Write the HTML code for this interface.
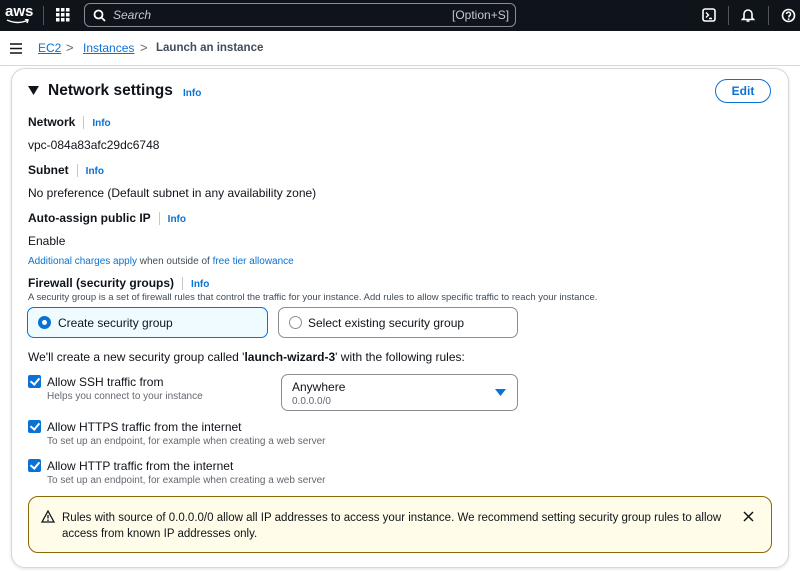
<!DOCTYPE html>
<html><head><meta charset="utf-8"><style>
*{margin:0;padding:0;box-sizing:border-box}
body{width:800px;height:573px;overflow:hidden;background:#fff;font-family:"Liberation Sans",sans-serif;color:#0f141a;font-size:12px;position:relative}
.a{position:absolute;white-space:nowrap}
.b{font-weight:bold}
.l{color:#0972d3}
.info{color:#0972d3;font-weight:bold;font-size:10px}
.sep{display:inline-block;width:1px;height:13px;background:#c6c6cd;vertical-align:middle;margin:0 8px}
.s{color:#656871;font-size:10px}
.cb{position:absolute;width:13px;height:13px;background:#0972d3;border-radius:2px}
.cb:after{content:"";position:absolute;left:4px;top:1px;width:4px;height:7px;border:solid #fff;border-width:0 2px 2px 0;transform:rotate(40deg)}
</style></head><body>
<div class="a" style="left:0;top:0;width:800px;height:31px;background:#0f141a"></div>
<div class="a" style="left:5px;top:3px;color:#fff;font-weight:bold;font-size:15px">aws</div>
<svg class="a" style="left:6px;top:19px" width="24" height="6"><path d="M1 1 Q12 6 22 1 M19 0 L22 1 L21 4" stroke="#fff" stroke-width="1.5" fill="none"/></svg>
<div class="a" style="left:43px;top:6px;width:1px;height:19px;background:#555"></div>
<svg class="a" style="left:56px;top:8px" width="14" height="14" fill="#fff"><rect x="0" y="0" width="3.5" height="3.5"/><rect x="5" y="0" width="3.5" height="3.5"/><rect x="10" y="0" width="3.5" height="3.5"/><rect x="0" y="5" width="3.5" height="3.5"/><rect x="5" y="5" width="3.5" height="3.5"/><rect x="10" y="5" width="3.5" height="3.5"/><rect x="0" y="10" width="3.5" height="3.5"/><rect x="5" y="10" width="3.5" height="3.5"/><rect x="10" y="10" width="3.5" height="3.5"/></svg>
<div class="a" style="left:84px;top:3px;width:432px;height:24px;border:1.5px solid #8c8c94;border-radius:6px;background:#0f141a"></div>
<svg class="a" style="left:93px;top:9px" width="13" height="13"><circle cx="5.5" cy="5.5" r="4" stroke="#fff" stroke-width="1.8" fill="none"/><path d="M8.5 8.5L12 12" stroke="#fff" stroke-width="1.8"/></svg>
<div class="a" style="left:113px;top:8px;color:#c6c6cd;font-style:italic;font-size:12px">Search</div>
<div class="a" style="left:452px;top:8px;color:#c6c6cd;font-size:12px">[Option+S]</div>
<svg class="a" style="left:702px;top:8px" width="14" height="14"><rect x="1" y="1" width="12" height="12" rx="2" stroke="#fff" stroke-width="1.6" fill="none"/><path d="M4 4.5L6.5 7L4 9.5M7 10.5h3" stroke="#fff" stroke-width="1.4" fill="none"/></svg>
<div class="a" style="left:728px;top:6px;width:1px;height:19px;background:#555"></div>
<svg class="a" style="left:741px;top:7px" width="14" height="16"><path d="M3 11V7a4 4 0 0 1 8 0v4l1.5 1.5h-11z" stroke="#fff" stroke-width="1.6" fill="none"/><path d="M5.5 14h3" stroke="#fff" stroke-width="1.6"/></svg>
<div class="a" style="left:768px;top:6px;width:1px;height:19px;background:#555"></div>
<svg class="a" style="left:781px;top:8px" width="15" height="15"><circle cx="7.5" cy="7.5" r="6" stroke="#fff" stroke-width="1.6" fill="none"/><path d="M5.5 6a2 2 0 1 1 2.5 2v1.5" stroke="#fff" stroke-width="1.5" fill="none"/><circle cx="7.6" cy="11.2" r=".9" fill="#fff"/></svg>

<svg class="a" style="left:10px;top:43px" width="13" height="11"><path d="M0 1h12M0 5.5h12M0 10h12" stroke="#0f141a" stroke-width="1.6"/></svg>
<div class="a l" style="left:38px;top:41px;text-decoration:underline">EC2</div>
<div class="a" style="left:66px;top:40px;color:#656871;font-size:13px">&gt;</div>
<div class="a l" style="left:83px;top:41px;text-decoration:underline">Instances</div>
<div class="a" style="left:140px;top:40px;color:#656871;font-size:13px">&gt;</div>
<div class="a" style="left:156px;top:42px;color:#414d5c;font-weight:bold;font-size:11.5px">Launch an instance</div>
<div class="a" style="left:0;top:65px;width:800px;height:1px;background:#d5d7db"></div>

<div class="a" style="left:11px;top:68px;width:778px;height:500px;border:1px solid #d5d7db;border-radius:14px;box-shadow:0 1px 3px rgba(0,0,0,.12)"></div>
<svg class="a" style="left:28px;top:86px" width="11" height="9"><path d="M0 0h11L5.5 9z" fill="#0f141a"/></svg>
<div class="a b" style="left:48px;top:82px;font-size:15.5px">Network settings</div>
<div class="a info" style="left:183px;top:88px">Info</div>
<div class="a" style="left:715px;top:79px;width:56px;height:24px;border:1.5px solid #0972d3;border-radius:14px;color:#0972d3;font-weight:bold;text-align:center;line-height:22px">Edit</div>

<div class="a" style="left:28px;top:115px"><span class="b">Network</span><span class="sep"></span><span class="info">Info</span></div>
<div class="a" style="left:28px;top:138px">vpc-084a83afc29dc6748</div>
<div class="a" style="left:28px;top:163px"><span class="b">Subnet</span><span class="sep"></span><span class="info">Info</span></div>
<div class="a" style="left:28px;top:186px">No preference (Default subnet in any availability zone)</div>
<div class="a" style="left:28px;top:211px"><span class="b">Auto-assign public IP</span><span class="sep"></span><span class="info">Info</span></div>
<div class="a" style="left:28px;top:234px">Enable</div>
<div class="a" style="left:28px;top:256px;font-size:10px;color:#414d5c"><span class="l">Additional charges apply</span> when outside of <span class="l">free tier allowance</span></div>
<div class="a" style="left:28px;top:276px"><span class="b">Firewall (security groups)</span><span class="sep"></span><span class="info">Info</span></div>
<div class="a" style="left:28px;top:292px;font-size:9.5px;color:#414d5c">A security group is a set of firewall rules that control the traffic for your instance. Add rules to allow specific traffic to reach your instance.</div>

<div class="a" style="left:27px;top:307px;width:241px;height:31px;border:1.5px solid #0972d3;border-radius:7px;background:#f0fbff"></div>
<div class="a" style="left:38px;top:316px;width:13px;height:13px;border-radius:50%;border:4px solid #0972d3;background:#fff"></div>
<div class="a" style="left:58px;top:316px">Create security group</div>
<div class="a" style="left:278px;top:307px;width:240px;height:31px;border:1.5px solid #8c8c94;border-radius:7px"></div>
<div class="a" style="left:289px;top:316px;width:13px;height:13px;border-radius:50%;border:1.5px solid #8c8c94"></div>
<div class="a" style="left:308px;top:316px">Select existing security group</div>

<div class="a" style="left:28px;top:350px">We'll create a new security group called '<b>launch-wizard-3</b>' with the following rules:</div>
<div class="cb" style="left:28px;top:375px"></div>
<div class="a" style="left:47px;top:375px">Allow SSH traffic from</div>
<div class="a s" style="left:47px;top:391px">Helps you connect to your instance</div>
<div class="a" style="left:281px;top:374px;width:237px;height:37px;border:1.5px solid #8c8c94;border-radius:7px"></div>
<div class="a" style="left:292px;top:380px">Anywhere</div>
<div class="a s" style="left:292px;top:396px">0.0.0.0/0</div>
<svg class="a" style="left:495px;top:389px" width="11" height="8"><path d="M0 0h11L5.5 7z" fill="#0972d3"/></svg>
<div class="cb" style="left:28px;top:420px"></div>
<div class="a" style="left:47px;top:420px">Allow HTTPS traffic from the internet</div>
<div class="a s" style="left:47px;top:436px">To set up an endpoint, for example when creating a web server</div>
<div class="cb" style="left:28px;top:459px"></div>
<div class="a" style="left:47px;top:459px">Allow HTTP traffic from the internet</div>
<div class="a s" style="left:47px;top:475px">To set up an endpoint, for example when creating a web server</div>

<div class="a" style="left:28px;top:496px;width:744px;height:57px;border:1.5px solid #8d6605;border-radius:10px;background:#fffce9"></div>
<svg class="a" style="left:41px;top:510px" width="14" height="13"><path d="M7 1L13 12H1z" stroke="#0f141a" stroke-width="1.3" fill="none"/><path d="M7 5v3.5" stroke="#0f141a" stroke-width="1.3"/><circle cx="7" cy="10.2" r=".8" fill="#0f141a"/></svg>
<div class="a" style="left:62px;top:510px;font-size:11.5px;line-height:16px;white-space:normal;width:670px">Rules with source of 0.0.0.0/0 allow all IP addresses to access your instance. We recommend setting security group rules to allow access from known IP addresses only.</div>
<svg class="a" style="left:743px;top:511px" width="11" height="11"><path d="M1 1l9 9M10 1l-9 9" stroke="#0f141a" stroke-width="1.5"/></svg>
</body></html>
